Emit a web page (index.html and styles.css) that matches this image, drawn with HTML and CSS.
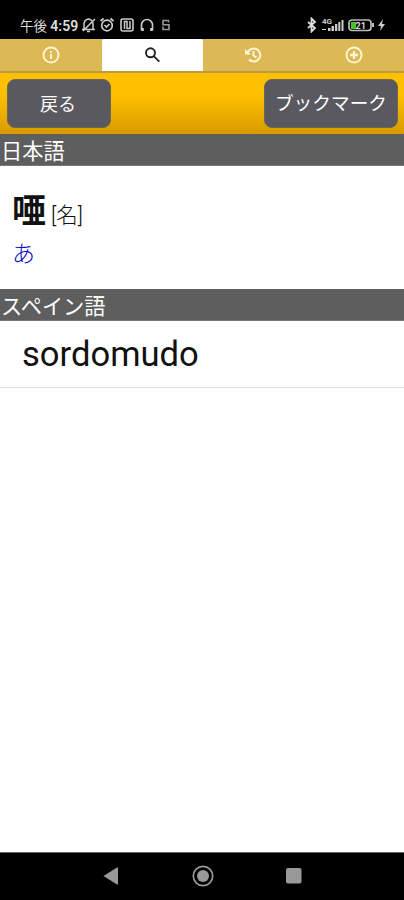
FILE: index.html
```html
<!DOCTYPE html>
<html lang="ja">
<head>
<meta charset="utf-8">
<title>辞書</title>
<link rel="stylesheet" href="styles.css">
</head>
<body>
<header class="status">
  <div class="status-left">
    <span class="clock">午後 <b>4:59</b></span>
    <svg class="bell" width="15" height="16" viewBox="0 0 15 16" fill="none" stroke="#ccc" stroke-width="1.500"><path d="M3 12V7q0-4 4.500-5q4.500 1 4.500 5v5M1 12.500h13M6 14.500h3M14 2L2 14"/></svg>
    <svg class="alarm" width="16" height="16" viewBox="0 0 16 16" fill="none" stroke="#ccc" stroke-width="1.700"><circle cx="8" cy="8.500" r="5.300"/><path d="M1.500 4L4.500 1.500M14.500 4L11.500 1.500M5.500 8l2 2l3-3"/></svg>
    <svg class="nfc" width="14" height="16" viewBox="0 0 14 16" fill="none" stroke="#ccc" stroke-width="1.600"><rect x="1" y="2" width="12" height="12" rx="2"/><path d="M4.500 12V4.500H7V11.500h3V4" stroke-width="1.500"/></svg>
    <svg class="phones" width="16" height="16" viewBox="0 0 16 16" fill="none" stroke="#ccc" stroke-width="1.600"><path d="M4.500 13H2.500V8a5.500 5.500 0 0 1 11 0v5h-2M4 11v3M12 11v3"/></svg>
    <svg class="app" width="10" height="16" viewBox="0 0 10 16" fill="none" stroke="#999" stroke-width="1.600"><path d="M8 3.500H2v4.300h6V12.500H2V9.500M7.500 3.500v2"/></svg>
  </div>
  <div class="status-right">
    <svg width="12" height="16" viewBox="0 0 12 16" fill="none" stroke="#ddd" stroke-width="1.800"><path d="M2 5l7 6l-3.500 3.500V1.500L9 5l-7 6"/></svg>
    <svg class="signal" width="22" height="16" viewBox="0 0 22 16"><text class="network" x="0" y="7">4G</text><path d="M0 12h4v1H0zM6 11h2.500v3H6zM9.500 9h2.500v5H9.500zM13 7h2.300v7H13zM16.300 5h2v9h-2zM19.500 3h2v11h-2z" fill="#ccc"/></svg>
    <svg class="battery" width="27" height="16" viewBox="0 0 27 16"><rect x="1" y="3" width="22" height="10.500" rx="3" fill="none" stroke="#bbb" stroke-width="1.700"/><path d="M3 5h5v7H3z" fill="#43c51d"/><path d="M24 6h2v4h-2z" fill="#bbb"/><text class="charge" x="7.500" y="11.500">21</text></svg>
    <svg class="bolt" width="7" height="16" viewBox="0 0 7 16"><path d="M5 2L0 9h3l-1 5l5-7H4z" fill="#ccc"/></svg>
  </div>
</header>
<nav class="tabs">
  <a class="tab"><svg width="18" height="18" viewBox="0 0 18 18" fill="none" stroke="#fff6da" stroke-width="1.900"><circle cx="9" cy="9" r="7.500"/><path d="M9 8v5M9 5v1.700"/></svg></a>
  <a class="tab active"><svg width="18" height="18" viewBox="0 0 18 18" fill="none" stroke="#222" stroke-width="1.900"><circle cx="6.500" cy="6.800" r="4.500"/><path d="M9.800 10.200l5.500 5.500"/></svg></a>
  <a class="tab"><svg width="18" height="18" viewBox="0 0 18 18" fill="none" stroke="#fff6da" stroke-width="2"><path d="M2.300 8A6.500 6.500 0 1 1 4 13.500M8.500 5v4.500l3 2"/><path d="M0 3v5.500h6z" fill="#fff6da" stroke="none"/></svg></a>
  <a class="tab"><svg width="18" height="18" viewBox="0 0 18 18" fill="none" stroke="#fff6da" stroke-width="1.900"><circle cx="9" cy="9" r="7.500"/><path d="M9 5v8M5 9h8" stroke-width="2.300"/></svg></a>
</nav>
<div class="toolbar">
  <button class="button back">戻る</button>
  <button class="button bookmark">ブックマーク</button>
</div>
<main>
  <h2 class="heading">日本語</h2>
  <section class="entry">
    <div class="entry-line"><strong class="word">唖</strong><span class="part">[名]</span></div>
    <div class="reading">あ</div>
  </section>
  <h2 class="heading">スペイン語</h2>
  <div class="translation">sordomudo</div>
</main>
<footer class="navigation">
  <svg width="16" height="20" viewBox="0 0 16 20"><path d="M.5 10L14 1.500q1-.5 1 .5v16q0 1-1 .5z" fill="#999"/></svg>
  <svg width="22" height="22" viewBox="0 0 22 22"><circle cx="11" cy="11" r="9.700" fill="none" stroke="#999" stroke-width="1.700"/><circle cx="11" cy="11" r="6" fill="#999"/></svg>
  <svg width="16" height="16" viewBox="0 0 16 16"><rect width="15.500" height="15.500" rx="2" fill="#999"/></svg>
</footer>
</body>
</html>
```
FILE: styles.css
```css
* { box-sizing: border-box; }
body {
  margin: 0;
  height: 900px;
  display: flex;
  flex-direction: column;
  background: #fff;
  color: #111;
  font-family: Roboto, "Noto Sans CJK JP", sans-serif;
}
svg { display: block; flex: none; }
.status {
  height: 39px;
  flex: none;
  padding: 17px 20px 0;
  background: #000;
  color: #ddd;
  display: flex;
  justify-content: space-between;
}
.status-left, .status-right { display: flex; height: 16px; align-items: center; }
.clock { width: 61px; padding-top: 1px; font-size: 13.500px; line-height: 16px; white-space: nowrap; }
.clock b { font-weight: 600; font-size: 14px; }
.alarm { margin-left: 3px; }
.nfc { margin-left: 5px; }
.phones { margin-left: 5px; }
.app { margin-left: 6px; }
.status-right { margin-right: -1px; }
.signal { margin-left: 4px; }
.battery { margin-left: 4px; }
.bolt { margin-left: 3px; }
.network { fill: #ccc; font-size: 8px; font-weight: 700; }
.charge { fill: #ddd; font-size: 9px; font-weight: 700; }
.tabs {
  height: 34px;
  flex: none;
  display: grid;
  grid-template-columns: 102px 101px 101px 100px;
  background: #dcb955;
  border-bottom: 2px solid #bd9b41;
}
.tab { display: flex; align-items: center; justify-content: center; }
.active { background: #fff; border-radius: 2px 2px 0 0; }
.toolbar {
  height: 61px;
  flex: none;
  padding: 6px 6px 0 7px;
  background: linear-gradient(#ffc000 35%, #d79b00);
  display: flex;
  justify-content: space-between;
}
.button {
  height: 49px;
  padding: 0;
  border: 1px solid #6c6658;
  border-radius: 8px;
  background: #59595f;
  color: #fff;
  font-family: inherit;
  font-size: 18px;
  line-height: 49px;
}
.back { width: 104px; padding-right: 2px; }
.bookmark { width: 134px; font-size: 18.700px; }
.heading {
  height: 32px;
  margin: 0;
  padding-left: 1px;
  border-bottom: 1px solid #777;
  background: #5e5e5e;
  color: #fff;
  font-size: 21.200px;
  font-weight: 400;
  line-height: 36px;
}
.entry { height: 123px; padding: 20px 12px 0; }
.entry-line { display: flex; align-items: baseline; height: 51px; line-height: 51px; }
.word { font-size: 34px; font-weight: 700; }
.part { margin-left: 5px; font-size: 21.500px; font-weight: 300; }
.reading { color: #0808c8; font-size: 23px; font-weight: 300; line-height: 36px; }
.translation {
  height: 67px;
  padding-left: 22px;
  border-bottom: 1px solid #ddd;
  font-size: 34.600px;
  line-height: 67px;
}
.navigation {
  height: 48px;
  flex: none;
  margin-top: auto;
  padding: 0 102px 2px 103px;
  border-top: 1px solid #666;
  background: #000;
  display: flex;
  align-items: center;
  justify-content: space-between;
}
```
